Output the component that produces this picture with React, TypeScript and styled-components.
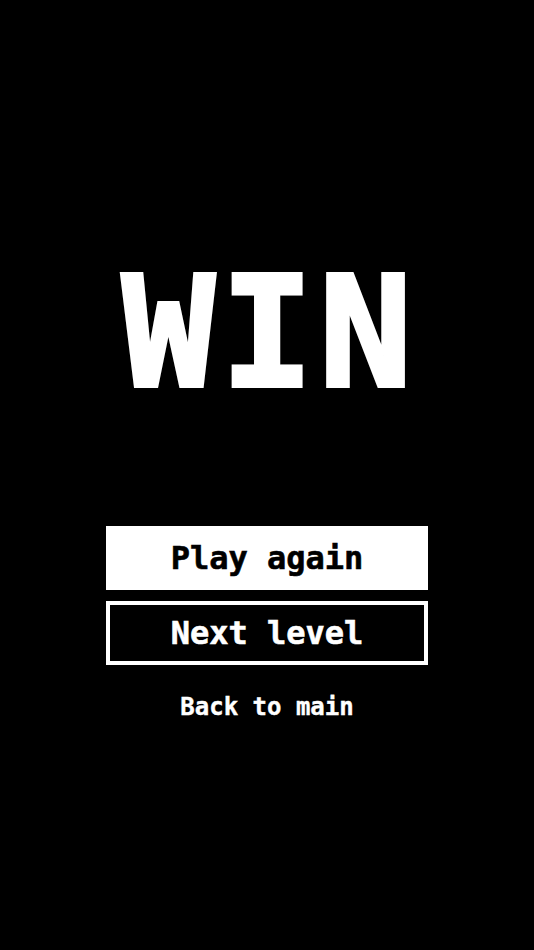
import styled, { createGlobalStyle } from "styled-components";

const GlobalStyle = createGlobalStyle`
  html, body {
    margin: 0;
    padding: 0;
    background: #000;
  }
  * {
    box-sizing: border-box;
  }
`;

const Screen = styled.div`
  width: 534px;
  height: 950px;
  background: #000;
  color: #fff;
  font-family: "DejaVu Sans Mono", "Liberation Mono", monospace;
  font-weight: 700;
  display: flex;
  flex-direction: column;
  align-items: center;
  padding-top: 255px;
`;

const Title = styled.h1`
  margin: 0;
  padding-left: 6px;
  font-size: 154px;
  line-height: 156px;
  letter-spacing: 6px;
  font-weight: 700;
  -webkit-text-stroke: 4px #fff;
`;

const Menu = styled.div`
  margin-top: 115px;
  display: flex;
  flex-direction: column;
  gap: 11px;
  width: 322px;
`;

const MenuButton = styled.button<{ $filled?: boolean }>`
  height: 64px;
  width: 100%;
  border: 4px solid #fff;
  background: ${(p) => (p.$filled ? "#fff" : "#000")};
  color: ${(p) => (p.$filled ? "#000" : "#fff")};
  -webkit-text-stroke: 0.6px ${(p) => (p.$filled ? "#000" : "#fff")};
  font-family: inherit;
  font-weight: 700;
  font-size: 32px;
  cursor: pointer;
  padding: 0;
`;

const TextLink = styled.button`
  margin-top: 28px;
  background: none;
  border: none;
  color: #fff;
  -webkit-text-stroke: 0.4px #fff;
  font-family: inherit;
  font-weight: 700;
  font-size: 24px;
  cursor: pointer;
  padding: 0;
`;

export default function App() {
  return (
    <>
      <GlobalStyle />
      <Screen>
        <Title>WIN</Title>
        <Menu>
          <MenuButton $filled>Play again</MenuButton>
          <MenuButton>Next level</MenuButton>
        </Menu>
        <TextLink>Back to main</TextLink>
      </Screen>
    </>
  );
}
